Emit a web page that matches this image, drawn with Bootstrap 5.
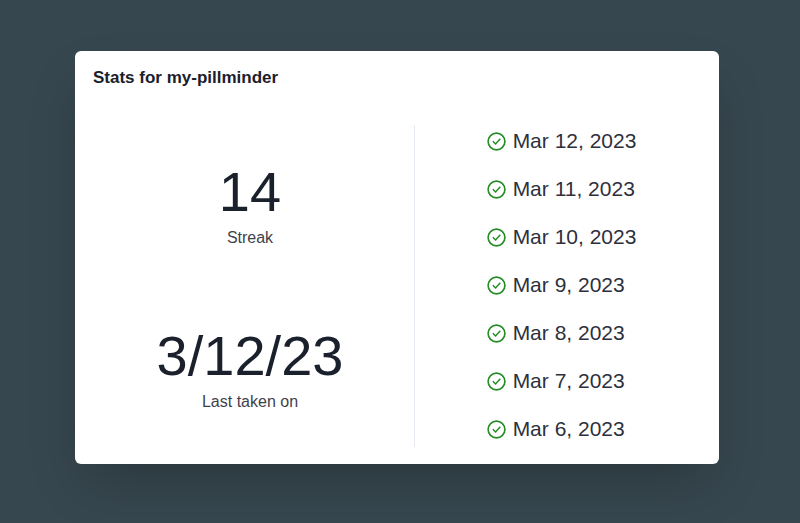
<!DOCTYPE html>
<html lang="en">
<head>
<meta charset="utf-8">
<meta name="viewport" content="width=device-width, initial-scale=1">
<title>Stats for my-pillminder</title>
<link rel="stylesheet" href="https://cdn.jsdelivr.net/npm/bootstrap@5.3.0/dist/css/bootstrap.min.css">
<style>
  body { background: #37474f; color: #1a202c; font-family: "Liberation Sans", Arial, sans-serif; }
  .page { padding: 24px 81px 32px 75px; }
  .stats-card { border-radius: 6px; padding: 17px 18px; box-shadow: 0 25px 50px -12px rgba(0, 0, 0, .25); }
  .stats-title { font-size: 17px; line-height: 20px; margin-bottom: 37px; }
  .stats-body { grid-template-columns: 314fr 1px 279fr; column-gap: 7px; }
  .stat-list { gap: 8px; padding-top: 2px; }
  .stat-value { font-size: 56px; line-height: 64px; margin-bottom: 2px; }
  .stat-label { font-size: 16px; line-height: 24px; opacity: .85; }
  .divider { background: #e6ebf1; }
  .day-list { gap: 16px; font-size: 21px; line-height: 32px; padding-bottom: 2px; }
  .day { gap: 7px; }
  .day svg { width: 19px; height: 19px; color: #228b22; }
  .day time { opacity: .92; }
</style>
</head>
<body>
<svg class="d-none" aria-hidden="true">
  <symbol id="taken" viewBox="0 0 19 19">
    <g fill="none" stroke="currentColor" stroke-width="1.6">
      <circle cx="9.5" cy="9.5" r="8.4"/>
      <path d="M5.8 9.3 8.5 12 13.3 6.7" stroke-width="1.4"/>
    </g>
  </symbol>
</svg>
<main class="page min-vh-100 d-flex flex-column justify-content-center">
  <section class="stats-card bg-white">
    <h1 class="stats-title fw-bold">Stats for my-pillminder</h1>
    <div class="stats-body d-grid">
      <div class="stat-list d-flex flex-column text-center">
        <div class="flex-fill d-flex flex-column justify-content-center">
          <div class="stat-value">14</div>
          <div class="stat-label">Streak</div>
        </div>
        <div class="flex-fill d-flex flex-column justify-content-center">
          <div class="stat-value">3/12/23</div>
          <div class="stat-label">Last taken on</div>
        </div>
      </div>
      <div class="divider"></div>
      <div class="d-flex justify-content-center">
        <ul class="day-list list-unstyled d-flex flex-column mb-0">
          <li class="day d-flex align-items-center"><svg role="img" aria-label="Taken"><use href="#taken"/></svg><time datetime="2023-03-12">Mar 12, 2023</time></li>
          <li class="day d-flex align-items-center"><svg role="img" aria-label="Taken"><use href="#taken"/></svg><time datetime="2023-03-11">Mar 11, 2023</time></li>
          <li class="day d-flex align-items-center"><svg role="img" aria-label="Taken"><use href="#taken"/></svg><time datetime="2023-03-10">Mar 10, 2023</time></li>
          <li class="day d-flex align-items-center"><svg role="img" aria-label="Taken"><use href="#taken"/></svg><time datetime="2023-03-09">Mar 9, 2023</time></li>
          <li class="day d-flex align-items-center"><svg role="img" aria-label="Taken"><use href="#taken"/></svg><time datetime="2023-03-08">Mar 8, 2023</time></li>
          <li class="day d-flex align-items-center"><svg role="img" aria-label="Taken"><use href="#taken"/></svg><time datetime="2023-03-07">Mar 7, 2023</time></li>
          <li class="day d-flex align-items-center"><svg role="img" aria-label="Taken"><use href="#taken"/></svg><time datetime="2023-03-06">Mar 6, 2023</time></li>
        </ul>
      </div>
    </div>
  </section>
</main>
<script src="https://cdn.jsdelivr.net/npm/bootstrap@5.3.0/dist/js/bootstrap.bundle.min.js"></script>
</body>
</html>
